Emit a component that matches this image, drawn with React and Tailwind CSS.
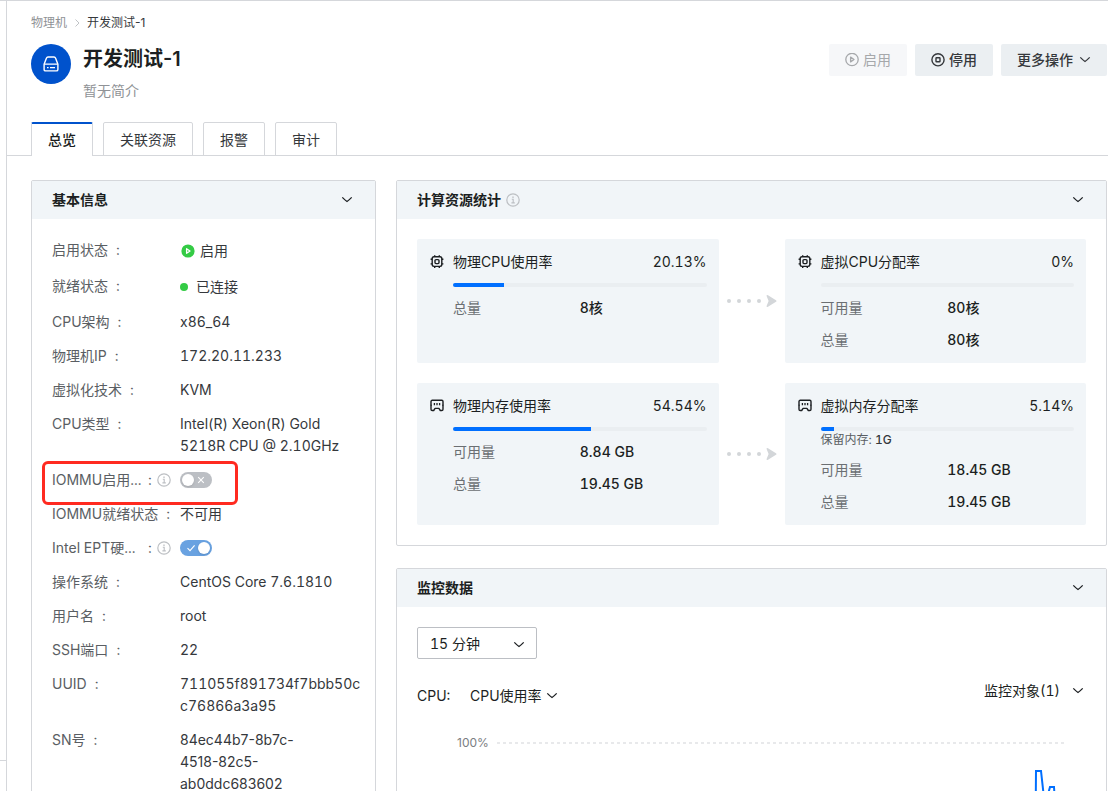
import React, { useState } from 'react';

const Chevron = ({ className = '' }) => (
  <svg className={`w-3 h-3 shrink-0 ${className}`} viewBox="0 0 12 12" fill="none" stroke="currentColor" strokeWidth="1.3" aria-hidden="true">
    <path d="M1.3 3.4 Q4.4 6.5 6 7.5 Q7.6 6.5 10.7 3.4" />
  </svg>
);

const InfoIcon = () => (
  <svg className="w-3.5 h-3.5 shrink-0 text-[#bcbfc3]" viewBox="0 0 14 14" fill="none" stroke="currentColor" aria-hidden="true">
    <circle cx="7" cy="7" r="6.2" strokeWidth="1.2" />
    <path d="M5.8 6.3h1.4v3.5M5.4 9.9h3.4" strokeWidth="1.1" />
    <rect x="6.3" y="3.5" width="1.4" height="1.4" fill="currentColor" stroke="none" />
  </svg>
);

const PlayIcon = () => (
  <svg className="w-3.5 h-3.5" viewBox="0 0 14 14" fill="none" stroke="currentColor" strokeWidth="1.3" aria-hidden="true">
    <circle cx="7" cy="6.5" r="6.2" />
    <path d="M5.6 4.1v4.8L9 6.5z" strokeLinejoin="round" />
  </svg>
);

const StopIcon = () => (
  <svg className="w-3.5 h-3.5" viewBox="0 0 14 14" fill="none" stroke="currentColor" strokeWidth="1.4" aria-hidden="true">
    <circle cx="7" cy="6.8" r="6.1" />
    <rect x="5" y="4.8" width="4" height="4" rx="0.5" />
  </svg>
);

const CpuIcon = () => (
  <svg className="w-3.5 h-3.5 shrink-0" viewBox="0 0 14 14" fill="none" stroke="currentColor" strokeWidth="1.4" aria-hidden="true">
    <rect x="2.2" y="1.8" width="9.6" height="9.6" rx="1.8" />
    <rect x="5" y="4.6" width="4" height="4" rx="1" />
    <path d="M4.7 0.2v1.6M9.3 0.2v1.6M4.7 11.4v1.6M9.3 11.4v1.6M0.6 4.3h1.6M0.6 8.9h1.6M11.8 4.3h1.6M11.8 8.9h1.6" />
  </svg>
);

const MemoryIcon = () => (
  <svg className="w-3.5 h-3.5 shrink-0" viewBox="0 0 14 14" fill="none" stroke="currentColor" strokeWidth="1.4" aria-hidden="true">
    <path d="M2.2 1.3h9.6a1.2 1.2 0 0 1 1.2 1.2v7.8a1.2 1.2 0 0 1-1.2 1.2h-1.5L8.9 9.4H5.1l-1.4 2.1H2.2A1.2 1.2 0 0 1 1 10.3V2.5a1.2 1.2 0 0 1 1.2-1.2z" strokeLinejoin="round" />
    <path d="M.6 6.2h1.2M12.2 6.2h1.2" strokeWidth="1" />
    <path d="M4.4 4v2.2M7 4v2.2M9.6 4v2.2" strokeWidth="1.3" />
  </svg>
);

const HostIcon = () => (
  <svg className="w-4 h-4" viewBox="0 0 16 16" fill="none" stroke="currentColor" strokeWidth="1.4" strokeLinejoin="round" aria-hidden="true">
    <path d="M1.1 8.3 3.4 2.2Q3.9 1 5 1h6q1.1 0 1.6 1.2l2.3 6.1v5.1q0 1.5-1.5 1.5H2.6q-1.5 0-1.5-1.5z" />
    <path d="M1.2 8.1h13.6M4 11.6h1.6M7 11.6h5" />
  </svg>
);

const Arrow = () => (
  <svg className="w-[50px] h-3 text-[#d3d6d9]" viewBox="0 0 50 12" fill="currentColor" aria-hidden="true">
    <circle cx="2" cy="6" r="2" />
    <circle cx="12" cy="6" r="2" />
    <circle cx="22" cy="6" r="2" />
    <circle cx="32" cy="6" r="2" />
    <path d="M39.5.8Q39.7-.3 41 .3L49 5.2q1 .8 0 1.6l-8 4.9q-1.3.6-1.5-.5L41.6 6z" />
  </svg>
);

function Toggle({ id, defaultChecked }) {
  const [on, setOn] = useState(defaultChecked);
  return (
    <span className="relative inline-flex w-8 h-4">
      <input
        id={id}
        type="checkbox"
        role="switch"
        checked={on}
        onChange={e => setOn(e.target.checked)}
        className="appearance-none w-8 h-4 rounded-full bg-[#bcbfc4] checked:bg-[#69a2e1]"
      />
      <span className={`absolute top-0.5 w-3 h-3 rounded-full bg-white shadow-sm pointer-events-none ${on ? 'right-0.5' : 'left-0.5'}`}></span>
      <svg className={`absolute top-1 w-2 h-2 pointer-events-none ${on ? 'left-[7px]' : 'right-[7px]'}`} viewBox="0 0 8 8" fill="none" stroke="#fff" strokeWidth="1.1">
        {on ? <path d="M0.5 4.2 3 6.6 7.6 1.4" /> : <path d="M1.2 1.2 6.8 6.8M6.8 1.2 1.2 6.8" />}
      </svg>
    </span>
  );
}

const infoRows = [
  { label: '启用状态', state: 'enabled', value: '启用' },
  { label: '就绪状态', state: 'connected', value: '已连接' },
  { label: 'CPU架构', value: 'x86_64' },
  { label: '物理机IP', value: '172.20.11.233' },
  { label: '虚拟化技术', value: 'KVM' },
  { label: 'CPU类型', value: 'Intel(R) Xeon(R) Gold\n5218R CPU @ 2.10GHz' },
  { label: 'IOMMU启用...', toggle: 'iommu', on: false, marked: true },
  { label: 'IOMMU就绪状态', value: '不可用' },
  { label: 'Intel EPT硬...', toggle: 'ept', on: true },
  { label: '操作系统', value: 'CentOS Core 7.6.1810' },
  { label: '用户名', value: 'root' },
  { label: 'SSH端口', value: '22' },
  { label: 'UUID', value: '711055f891734f7bbb50c\nc76866a3a95' },
  { label: 'SN号', value: '84ec44b7-8b7c-\n4518-82c5-\nab0ddc683602', proportional: true },
];

function InfoRow({ row }) {
  if (row.toggle) {
    return (
      <div className="relative flex items-center h-[22px]">
        {row.marked && <div className="absolute -left-2.5 -top-2 w-[196px] h-11 border-[3px] border-[#ff2a20] rounded-md pointer-events-none"></div>}
        <dt className="w-32 shrink-0 flex items-center text-[#5a5e63]">
          <label htmlFor={row.toggle} className="w-24 whitespace-nowrap">{row.label}</label>
          <span className="mr-[5px]">:</span>
          <InfoIcon />
        </dt>
        <dd className="flex"><Toggle id={row.toggle} defaultChecked={row.on} /></dd>
      </div>
    );
  }

  return (
    <div className="flex">
      <dt className="w-32 shrink-0 whitespace-nowrap text-[#5a5e63]">
        {row.label}<span className="ml-2">:</span>
      </dt>
      <dd className={`whitespace-pre-line text-[#35383c] ${row.state ? 'flex items-center h-6' : ''} ${row.proportional ? 'proportional-nums' : ''}`}>
        {row.state === 'enabled' && (
          <svg className="w-4 h-4 mr-1" viewBox="0 0 16 16" aria-hidden="true">
            <circle cx="8" cy="8" r="6.6" fill="#34cb45" />
            <path d="M6.6 5.7v4.6L10 8z" fill="none" stroke="#fff" strokeWidth="1.3" strokeLinejoin="round" />
          </svg>
        )}
        {row.state === 'connected' && <span className="w-2 h-2 mr-2 rounded-full bg-[#34cb45]"></span>}
        {row.value}
      </dd>
    </div>
  );
}

function Panel({ title, info, children }) {
  return (
    <section className="border border-[#d5d7db] rounded-xs">
      <header className="flex items-center h-[38px] px-5 bg-[#f1f5f8] text-[#1c1f22]">
        <h2 className="font-bold mr-[5px]">{title}</h2>
        {info && <InfoIcon />}
        <button className="ml-auto mr-0.5" aria-label={title}><Chevron /></button>
      </header>
      {children}
    </section>
  );
}

function StatTile({ icon, title, percent, note, rows }) {
  return (
    <div className="flex-1 flex gap-[9px] py-3 pl-[13px] pr-3 bg-[#f1f5f8] rounded-xs">
      <span className="pt-1 text-[#1c1f22]">{icon}</span>
      <div className="flex-1">
        <div className="flex justify-between text-[#1c1f22]">
          <h3>{title}</h3>
          <span>{percent}%</span>
        </div>
        <div className="h-1 mt-2.5 rounded-full bg-[#eaeef1] overflow-hidden">
          <div className="h-1 bg-[#006fff]" style={{ width: `${percent}%` }}></div>
        </div>
        {note && <p className="text-xs leading-[18px] text-[#5a5e63]">{note[0]} <span className="font-medium text-[#35383c]">{note[1]}</span></p>}
        <dl className="mt-2.5 space-y-2.5">
          {rows.map(([name, value]) => (
            <div key={name} className="grid grid-cols-2">
              <dt className="text-[#6b6f73]">{name}</dt>
              <dd className="font-medium text-[#1c1f22]">{value}</dd>
            </div>
          ))}
        </dl>
      </div>
    </div>
  );
}

const tabs = ['总览', '关联资源', '报警', '审计'];

function App() {
  const [active, setActive] = useState('总览');

  return (
    <div className="h-screen overflow-hidden flex border-t border-[#d5d7db] bg-white text-sm leading-[22px] tabular-nums font-['Inter','Noto_Sans_CJK_SC',sans-serif]">
      {/* collapsed side bar */}
      <aside className="w-[7px] shrink-0 flex flex-col justify-end border-r border-[#d5d7db]">
        <div className="h-[31px] border-t border-[#d5d7db]"></div>
      </aside>

      <main className="flex-1 min-w-0">
        {/* Header */}
        <div className="pl-6 pr-px pt-3 proportional-nums">
          <nav className="flex items-center h-5 text-xs">
            <a href="#hosts" className="text-[#8f9296]">物理机</a>
            <svg className="w-5 h-2.5 text-[#c0c3c6]" viewBox="0 0 20 10" fill="none" stroke="currentColor" aria-hidden="true">
              <path d="M8.5 1.5 12 5 8.5 8.5" />
            </svg>
            <span className="text-[#35383c]">开发测试-1</span>
          </nav>

          <div className="flex items-start mt-[11px]">
            <div className="w-10 h-10 rounded-full bg-[#0052cc] text-white flex items-center justify-center">
              <HostIcon />
            </div>
            <div className="ml-3">
              <h1 className="text-xl leading-[30px] font-semibold text-[#1c1f22]">开发测试-1</h1>
              <p className="mt-1.5 text-[#8f9296]">暂无简介</p>
            </div>
            <div className="ml-auto flex gap-2 text-[#35383c]">
              <button disabled className="h-8 px-4 flex items-center gap-1 rounded-xs bg-[#f6f7f9] text-[#a6a8ab]">
                <PlayIcon />启用
              </button>
              <button className="h-8 px-4 flex items-center gap-1 rounded-xs bg-[#ebeff2] font-medium">
                <StopIcon />停用
              </button>
              <button className="h-8 px-4 flex items-center gap-1.5 rounded-xs bg-[#ebeff2] font-medium">
                更多操作<Chevron />
              </button>
            </div>
          </div>
        </div>

        {/* Tabs */}
        <div role="tablist" className="flex gap-2.5 mt-5 pl-6 border-b border-[#d5d7db]">
          {tabs.map(tab => (
            <button
              key={tab}
              role="tab"
              aria-selected={active === tab}
              onClick={() => setActive(tab)}
              className={`h-[34px] -mb-px px-4 border-x rounded-t-xs border-[#d5d7db] ${
                active === tab
                  ? 'bg-white border-t-2 border-t-[#0052cc] font-medium text-[#1c1f22]'
                  : 'pt-0.5 border-y text-[#35383c]'
              }`}
            >
              {tab}
            </button>
          ))}
        </div>

        <div className="flex gap-5 pl-6 pr-px pt-6">
          <div className="w-[345px] shrink-0">
            <Panel title="基本信息">
              <dl className="p-5 space-y-3">
                {infoRows.map(row => <InfoRow key={row.label} row={row} />)}
              </dl>
            </Panel>
          </div>

          <div className="flex-1 min-w-0 flex flex-col gap-[22px]">
            <Panel title="计算资源统计" info>
              <div className="p-5 space-y-5">
                <div className="flex">
                  <StatTile icon={<CpuIcon />} title="物理CPU使用率" percent={20.13} rows={[['总量', '8核']]} />
                  <div className="w-[66px] flex items-center justify-center"><Arrow /></div>
                  <StatTile icon={<CpuIcon />} title="虚拟CPU分配率" percent={0} rows={[['可用量', '80核'], ['总量', '80核']]} />
                </div>
                <div className="flex">
                  <StatTile icon={<MemoryIcon />} title="物理内存使用率" percent={54.54} rows={[['可用量', '8.84 GB'], ['总量', '19.45 GB']]} />
                  <div className="w-[66px] flex items-center justify-center"><Arrow /></div>
                  <StatTile icon={<MemoryIcon />} title="虚拟内存分配率" percent={5.14} note={['保留内存:', '1G']} rows={[['可用量', '18.45 GB'], ['总量', '19.45 GB']]} />
                </div>
              </div>
            </Panel>

            <Panel title="监控数据">
              <div className="p-5 text-[#1c1f22]">
                <div className="relative w-30">
                  <select aria-label="时间范围" className="appearance-none w-full h-8 px-3 pt-px border border-[#bcbfc4] rounded-xs bg-white">
                    <option>15 分钟</option>
                    <option>1 小时</option>
                  </select>
                  <Chevron className="absolute right-3 top-3 pointer-events-none" />
                </div>

                <div className="flex justify-between items-start mt-[21px]">
                  <div className="flex items-center pt-[5px]">
                    <span className="w-[53px]">CPU:</span>
                    <button className="flex items-center gap-1">CPU使用率<Chevron /></button>
                  </div>
                  <button className="flex items-center gap-3 mr-0.5">监控对象(1)<Chevron /></button>
                </div>

                {/* CPU usage chart */}
                <div className="flex mt-[27px] pl-10 pr-5">
                  <span className="text-xs leading-[18px] w-10 proportional-nums text-[#7b7e82]">100%</span>
                  <svg className="flex-1 h-40" aria-hidden="true">
                    <line x1="0" y1="9" x2="100%" y2="9" stroke="#e8e9eb" strokeWidth="2" strokeDasharray="3 3" />
                    <svg x="100%" y="0" overflow="visible">
                      <path d="M-31 160 L-30 37 H-25 L-22 64 H-19 L-16 53 H-12 L-9 100 H0" fill="none" stroke="#006fff" strokeWidth="2" />
                    </svg>
                  </svg>
                </div>
              </div>
            </Panel>
          </div>
        </div>
      </main>
    </div>
  );
}

export default App;
